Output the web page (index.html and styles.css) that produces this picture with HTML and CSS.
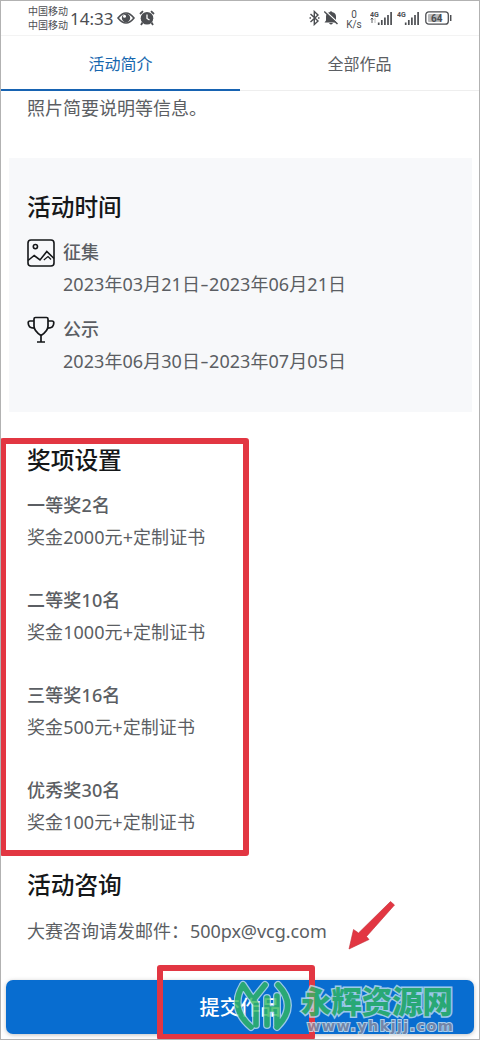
FILE: index.html
```html
<!DOCTYPE html>
<html lang="zh-CN">
<head>
<meta charset="utf-8">
<title>活动简介</title>
<link rel="stylesheet" href="styles.css">
</head>
<body>
<div class="screen">
  <header class="status">
    <div class="carriers"><span>中国移动</span><span>中国移动</span></div>
    <span class="clock">14:33</span>
    <svg class="eye" width="18" height="14" viewBox="0 0 18 14"><path d="M1 7Q9-3 17 7Q9 17 1 7Z" fill="none" stroke="#4c4e52" stroke-width="1.6"/><circle cx="9" cy="7" r="4.2" fill="#4c4e52"/><circle cx="7.500" cy="5.300" r="1.500" fill="#fff"/></svg>
    <svg class="alarm" width="16" height="16" viewBox="0 0 16 16"><circle cx="8" cy="8.200" r="6.300" fill="#4c4e52"/><path d="M1 4L4 1.200M12 1.200L15 4M3.500 12.500L2 15M12.500 12.500L14 15" stroke="#4c4e52" stroke-width="1.800"/><path d="M8 4.500V8.500L10.500 10" fill="none" stroke="#fff" stroke-width="1.300"/></svg>
    <div class="right">
      <svg class="bt" width="11" height="16" viewBox="0 0 11 16"><path d="M1.500 4L9 11L5.300 14.500V1.500L9 5L1.500 12" fill="none" stroke="#4c4e52" stroke-width="1.400"/><path d="M0.500 8h1.500M9 8h1.500" stroke="#4c4e52" stroke-width="1.300"/></svg>
      <svg class="bell" width="14" height="16" viewBox="0 0 14 16"><path d="M0.500 12.500L2 10.500V6.500Q2 3 5.500 2.200Q7 0.300 8.500 2.200Q12 3 12 6.500V10.500L13.500 12.500ZM5 13h4q-2 3-4 0Z" fill="#4c4e52"/><path d="M1 0.700L14 12.700" stroke="#fff" stroke-width="1.300"/><path d="M0.200 1.500L13.500 14" stroke="#4c4e52" stroke-width="1.500"/></svg>
      <div class="rate"><span>0</span><span>K/s</span></div>
      <svg class="signal" width="23" height="16" viewBox="0 0 23 16"><text x="0" y="6.500" class="net">4G</text><path d="M2 8v5M0.800 9.500L2 8l1.200 1.500" stroke="#4c4e52" stroke-width=".9" fill="none"/><path d="M5 8v5" stroke="#bbb" stroke-width=".9"/><path d="M8.700 12.500v2.500M11.800 10v5M14.900 7.500v7.500M18 5v10M21.100 2v13" stroke="#4c4e52" stroke-width="1.700"/></svg>
      <svg class="signal second" width="23" height="16" viewBox="0 0 23 16"><text x="0" y="6.500" class="net">4G</text><path d="M8.700 12.500v2.500M11.800 10v5M14.900 7.500v7.500M18 5v10M21.100 2v13" stroke="#4c4e52" stroke-width="1.700"/></svg>
      <svg class="battery" width="27" height="14" viewBox="0 0 27 14"><rect x=".8" y=".8" width="22.500" height="12.400" rx="3" fill="#fff" stroke="#4c4e52" stroke-width="1.300"/><rect x="3" y="3" width="13" height="8" rx="1" fill="#b9babc"/><path d="M25.700 4v6" stroke="#4c4e52" stroke-width="1.500"/><text x="6" y="10.500" class="level">64</text></svg>
    </div>
  </header>
  <nav class="tabs"><div class="tab active">活动简介</div><div class="tab">全部作品</div></nav>
  <main>
    <p class="intro">照片简要说明等信息。</p>
    <section class="schedule">
      <h2>活动时间</h2>
      <div class="period">
        <svg width="28" height="28" viewBox="0 0 28 28" fill="none" stroke="#151719" stroke-width="1.600"><rect x="1" y="1" width="26" height="26" rx="3"/><circle cx="8.400" cy="7.600" r="2.100"/><path d="M1 21.500L7.200 16.500L13 21L19.800 12.500L27 19.500"/><path d="M16.800 21L21 17.500L22 18.500L24 20.500" stroke-width="1.200"/></svg>
        <div><h3>征集</h3><p class="date">2023年03月21日<span class="dash">-</span>2023年06月21日</p></div>
      </div>
      <div class="period">
        <svg width="28" height="28" viewBox="0 0 28 28" fill="none" stroke="#151719" stroke-width="1.700"><path d="M7 3Q7 1.500 8.500 1.500H19.500Q21 1.500 21 3V10Q21 15 14 19.500Q7 15 7 10ZM7 5H3Q1.200 5 1.200 6.800C1.200 10 3 12.200 7 12.200M21 5H25Q26.800 5 26.800 6.800C26.800 10 25 12.200 21 12.200M14 19.500V26M10 26H18"/></svg>
        <div><h3>公示</h3><p class="date">2023年06月30日<span class="dash">-</span>2023年07月05日</p></div>
      </div>
    </section>
    <section class="awards">
      <h2>奖项设置</h2>
      <div class="award"><h3>一等奖2名</h3><p>奖金2000元+定制证书</p></div>
      <div class="award"><h3>二等奖10名</h3><p>奖金1000元+定制证书</p></div>
      <div class="award"><h3>三等奖16名</h3><p>奖金500元+定制证书</p></div>
      <div class="award"><h3>优秀奖30名</h3><p>奖金100元+定制证书</p></div>
    </section>
    <section class="contact"><h2>活动咨询</h2><p>大赛咨询请发邮件：<span class="mail">500px@vcg.com</span></p></section>
  </main>
  <button class="submit">提交作品</button>
  <div class="mark mark-awards"></div>
  <div class="mark mark-submit"></div>
  <svg class="arrow" width="50" height="52" viewBox="0 0 50 52"><path d="M43.500 2.500L47.500 6L19.500 37.500L22 40.500L2 50L6.500 30.500L11.500 34Z" fill="#e23642" stroke="#c42d38" stroke-width=".6"/></svg>
  <div class="watermark">
    <svg width="58" height="54" viewBox="0 0 58 54" fill="none" stroke-linecap="round" stroke-linejoin="round"><g class="halo"><path d="M9 6Q-5 29 17 48M9 6L17 18M31 6L19 21L22 25V46M33 19V46M33 30H43M43 17V46M44 6Q64 27 43 48"/></g><g class="ink"><path d="M9 6Q-5 29 17 48M9 6L17 18M31 6L19 21L22 25V46M33 19V46M33 30H43M43 17V46M44 6Q64 27 43 48"/></g></svg>
    <div class="brand"><span class="name">永辉资源网</span><span class="url">www.yhkjjj.com</span></div>
  </div>
</div>
</body>
</html>
```
FILE: styles.css
```css
* { box-sizing: border-box; }
body { margin: 0; background: #fff; font-family: "Noto Sans", "Noto Sans CJK SC", sans-serif; color: #5b5e63; }
h2, h3, p { margin: 0; }
svg { display: block; flex: none; }
.screen { position: relative; width: 480px; height: 1040px; overflow: hidden; border: 1px solid #b2b2b2; display: flex; flex-direction: column; }
.status { height: 35px; display: flex; align-items: flex-start; padding-left: 27px; border-bottom: 1px solid #f3f3f3; color: #4c4e52; flex: none; }
.carriers { display: flex; flex-direction: column; font: 10px/14px "Noto Sans CJK SC", sans-serif; padding-top: 3px; width: 42px; white-space: nowrap; }
.clock { font: 17px/22px "Noto Sans", sans-serif; margin-top: 7px; width: 47px; white-space: nowrap; }
.eye { margin-top: 10px; }
.alarm { margin: 9px 0 0 4px; }
.right { display: flex; margin-left: auto; padding-right: 27px; align-items: flex-start; }
.bt { margin-top: 9px; }
.bell { margin: 9px 0 0 4px; }
.rate { display: flex; flex-direction: column; align-items: center; width: 20px; margin: 9px 0 0 6px; font: 10px/9.500px Roboto, sans-serif; }
.signal { margin: 9px 0 0 6px; }
.second { margin-left: 4px; }
.net { font: bold 7px Roboto, sans-serif; fill: #4c4e52; }
.level { font: bold 10px Roboto, sans-serif; fill: #4c4e52; }
.battery { margin: 10px 0 0 5px; }
.tabs { display: flex; height: 55px; flex: none; border-bottom: 1px solid #eee; }
.tab { flex: 1; text-align: center; font-size: 16px; line-height: 57px; height: 55px; }
.active { color: #1867ae; border-bottom: 2px solid #1763b2; }
main { flex: none; height: 889px; }
.intro { padding: 4px 26px 0; font-size: 18px; line-height: 26px; height: 67px; }
h2 { color: #151719; font-size: 23.700px; line-height: 34px; font-weight: 500; }
h3 { font-size: 18px; line-height: 30px; font-weight: 500; }
p { font-size: 18px; line-height: 34px; white-space: nowrap; }
.schedule { background: #f7f8fa; margin: 0 7px 0 8px; height: 254px; padding: 32px 18px 0; }
.period { display: flex; gap: 8px; height: 77px; padding-top: 13px; }
.period svg { margin-top: 2px; }
.period h3 { line-height: 30px; }
.date { letter-spacing: .06px; }
.dash { display: inline-block; width: 9px; text-align: center; transform: scaleX(1.45); }
.awards { padding: 31px 26px 0; height: 425px; }
.award { height: 95px; padding-top: 13px; }
.award h3 { letter-spacing: .15px; }
.award p { letter-spacing: .07px; }
.contact { padding: 31px 26px 0; }
.contact h2 { margin-bottom: 12px; }
.mail { margin-left: 1px; letter-spacing: -.05px; }
.submit { border: 0; margin: 0 5px; width: 468px; height: 54px; border-radius: 7px; background: #086dd0; color: #fff; font: 500 20.200px/54px "Noto Sans CJK SC", sans-serif; padding: 0; box-shadow: 0 1px 4px #8888; flex: none; }
.mark { position: absolute; border: 6px solid #e23642; border-radius: 3px; }
.mark-awards { left: -1px; top: 437px; width: 249px; height: 418px; }
.mark-submit { left: 156px; top: 964px; width: 158px; height: 75px; }
.arrow { position: absolute; left: 346px; top: 898px; }
.watermark { position: absolute; left: 233px; top: 978px; display: flex; align-items: flex-start; gap: 9px; opacity: .8; }
.halo { stroke: #c0e0f0; stroke-width: 8px; }
.ink { stroke: #32b75f; stroke-width: 5.500px; }
.brand { display: flex; flex-direction: column; white-space: nowrap; padding-top: 4px; }
.name { font: 900 30.400px/34px "Noto Sans CJK SC", sans-serif; color: #32b75f; -webkit-text-stroke: 3px #c0e0f0; paint-order: stroke fill; }
.url { margin: 0 0 0 6px; font: bold 14.500px/18px "DejaVu Sans", sans-serif; letter-spacing: 1.350px; color: #8e8c9e; -webkit-text-stroke: 2px #d5e8f2; paint-order: stroke fill; }
```
